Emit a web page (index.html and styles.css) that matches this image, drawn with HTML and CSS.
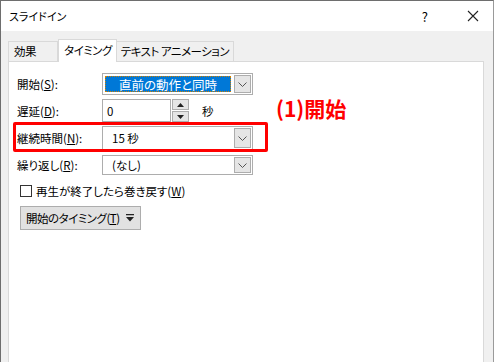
FILE: index.html
```html
<!DOCTYPE html>
<html lang="ja">
<head>
  <meta charset="UTF-8">
  <title>スライドイン</title>
  <link rel="stylesheet" href="styles.css">
</head>
<body>
  <div class="window">
    <!-- Title bar -->
    <div class="titlebar">
      <span class="title">スライドイン</span>
      <span class="help">?</span>
      <svg class="close" width="12" height="12" viewBox="0 0 12 12">
        <path d="M1 1 L11 11 M11 1 L1 11" stroke="#222" stroke-width="1.1" fill="none"/>
      </svg>
    </div>

    <!-- Tabs -->
    <div class="tabs">
      <div class="tab">効果</div>
      <div class="tab active">タイミング</div>
      <div class="tab">テキスト アニメーション</div>
    </div>

    <div class="panel">
      <div class="row row-start">
        <span class="label">開始(<u>S</u>):</span>
        <div class="combo focused">
          <div class="combo-value"><span class="selected">直前の動作と同時</span></div>
          <div class="combo-btn"><svg width="9" height="5" viewBox="0 0 9 5"><path d="M0.5 0.5 L4.5 4.5 L8.5 0.5" stroke="#555" fill="none"/></svg></div>
        </div>
      </div>

      <div class="row row-delay">
        <span class="label">遅延(<u>D</u>):</span>
        <div class="spin-input">0</div>
        <div class="spin">
          <div class="spin-btn"><svg width="7" height="4" viewBox="0 0 7 4"><path d="M0 4 L3.5 0 L7 4 Z" fill="#222"/></svg></div>
          <div class="spin-btn"><svg width="7" height="4" viewBox="0 0 7 4"><path d="M0 0 L3.5 4 L7 0 Z" fill="#222"/></svg></div>
        </div>
        <span class="unit">秒</span>
      </div>

      <div class="row row-duration">
        <span class="label">継続時間(<u>N</u>):</span>
        <div class="combo">
          <div class="combo-value">15 秒</div>
          <div class="combo-btn"><svg width="9" height="5" viewBox="0 0 9 5"><path d="M0.5 0.5 L4.5 4.5 L8.5 0.5" stroke="#555" fill="none"/></svg></div>
        </div>
      </div>

      <div class="row row-repeat">
        <span class="label">繰り返し(<u>R</u>):</span>
        <div class="combo">
          <div class="combo-value">(なし)</div>
          <div class="combo-btn"><svg width="9" height="5" viewBox="0 0 9 5"><path d="M0.5 0.5 L4.5 4.5 L8.5 0.5" stroke="#555" fill="none"/></svg></div>
        </div>
      </div>

      <div class="check-row">
        <span class="checkbox"></span>
        <span>再生が終了したら巻き戻す(<u>W</u>)</span>
      </div>

      <div class="btn-row">
        <div class="button"><span>開始のタイミング(<u>T</u>)</span> <svg width="8" height="8" viewBox="0 0 8 8"><path d="M0 0 H8 V1.2 H0 Z M0 3 H8 L4 7.5 Z" fill="#222"/></svg></div>
      </div>

      <!-- Annotation -->
      <div class="mark-box"></div>
      <div class="mark-text">(1)開始</div>
    </div>
  </div>
</body>
</html>
```

FILE: styles.css
```css
/* General styles */
body {
  margin: 0;
  width: 494px;
  height: 362px;
  overflow: hidden;
  font-family: "Noto Sans CJK JP", "Noto Sans", sans-serif;
  font-size: 11.5px;
  font-feature-settings: "palt";
  color: #000;
}

.window {
  box-sizing: border-box;
  width: 494px;
  height: 362px;
  display: flex;
  flex-direction: column;
  background-color: #f0f0f0;
  border-top: 1px solid #6e6e6e;
  border-left: 1px solid #6e6e6e;
  border-right: 1px solid #9a9a9a;
}

/* Title bar */
.titlebar {
  height: 30px;
  background-color: #fff;
  display: flex;
  align-items: center;
  padding-left: 8px;
  padding-right: 14px;
}

.title {
  flex: 1;
  font-size: 11px;
}

.help {
  font-size: 13px;
  margin-right: 39px;
}

/* Tabs */
.tabs {
  display: flex;
  align-items: flex-end;
  padding-left: 7px;
  height: 30px;
  letter-spacing: -0.5px;
}

.tab {
  height: 19px;
  line-height: 19px;
  padding: 0 4px;
  border: 1px solid #d9d9d9;
  border-bottom: none;
  background-color: #f0f0f0;
  white-space: nowrap;
}

.tab:first-child {
  width: 39px;
  padding-left: 5px;
}

.tab + .tab {
  border-left: none;
}

.tab.active {
  height: 22px;
  line-height: 21px;
  background-color: #fff;
  margin-bottom: -1px;
  position: relative;
  z-index: 1;
  border-left: 1px solid #d9d9d9;
  padding: 0 4px 0 5px;
}

/* Panel */
.panel {
  position: relative;
  flex: 1;
  margin: 0 9px 0 7px;
  padding: 11px 0 0 8px;
  background-color: #fff;
  border: 1px solid #d9d9d9;
  border-bottom: none;
}

.row {
  display: flex;
  align-items: center;
}

.label {
  width: 85px;
}

.row-start { height: 22px; }
.row-delay { height: 23px; margin-top: 4px; }
.row-duration { height: 24px; margin-top: 4px; }
.row-repeat { height: 20px; margin-top: 5px; }

.combo {
  box-sizing: border-box;
  width: 151px;
  height: 100%;
  border: 1px solid #adadad;
  display: flex;
  padding: 1px;
  background-color: #fff;
}

.combo-value {
  flex: 1;
  padding-left: 8px;
  display: flex;
  align-items: center;
}

.combo-btn {
  width: 15px;
  border: 1px solid #adadad;
  background-color: #e5e5e5;
  display: flex;
  align-items: center;
  justify-content: center;
  margin-left: 2px;
}

.combo.focused .combo-value {
  padding: 1px;
}

.selected {
  flex: 1;
  align-self: stretch;
  background-color: #0078d7;
  color: #fff;
  outline: 1px dotted #d08000;
  outline-offset: -1px;
  display: flex;
  align-items: center;
  justify-content: center;
  font-size: 12.5px;
}

.spin-input {
  box-sizing: border-box;
  width: 69px;
  height: 100%;
  border: 1px solid #adadad;
  padding-left: 4px;
  display: flex;
  align-items: center;
}

.spin {
  display: flex;
  flex-direction: column;
  justify-content: center;
  gap: 1px;
  margin-left: 1px;
  height: 100%;
}

.spin-btn {
  width: 15px;
  height: 9px;
  border: 1px solid #adadad;
  background-color: #e5e5e5;
  display: flex;
  align-items: center;
  justify-content: center;
}

.unit {
  margin-left: 13px;
}

.check-row {
  display: flex;
  align-items: center;
  gap: 4px;
  margin-top: 9px;
  padding-left: 3px;
  height: 14px;
}

.checkbox {
  box-sizing: border-box;
  width: 12px;
  height: 12px;
  border: 1px solid #333;
  background-color: #fff;
}

.btn-row {
  margin-top: 8px;
  padding-left: 3px;
}

.button {
  box-sizing: border-box;
  display: inline-flex;
  align-items: center;
  gap: 6px;
  height: 24px;
  padding: 0 6px 0 5px;
  white-space: nowrap;
  letter-spacing: -0.5px;
  border: 1px solid #adadad;
  background-color: #e1e1e1;
}

/* Annotation */
.mark-box {
  position: absolute;
  left: 4px;
  top: 60px;
  width: 249px;
  height: 24px;
  border: 3px solid #ff0000;
  border-radius: 2px;
}

.mark-text {
  position: absolute;
  left: 267px;
  top: 31px;
  color: #ff0000;
  font-weight: bold;
  font-size: 21px;
  font-feature-settings: normal;
}
```
